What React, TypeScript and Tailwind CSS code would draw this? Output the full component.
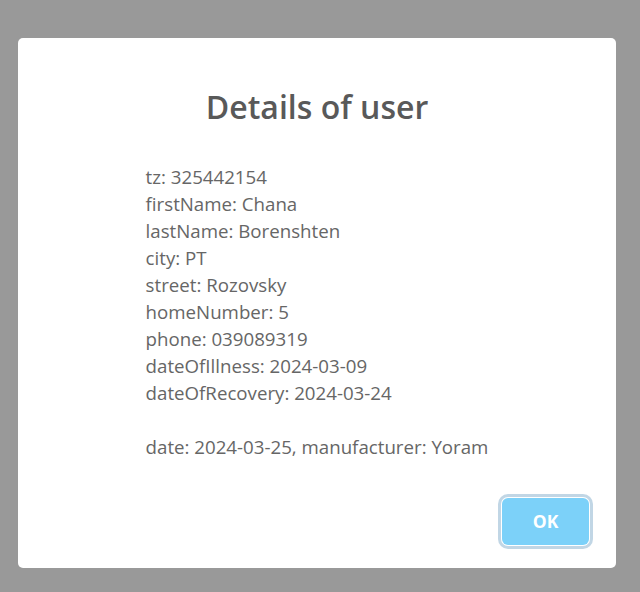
import React from "react";

const lines = [
  "tz: 325442154",
  "firstName: Chana",
  "lastName: Borenshten",
  "city: PT",
  "street: Rozovsky",
  "homeNumber: 5",
  "phone: 039089319",
  "dateOfIllness: 2024-03-09",
  "dateOfRecovery: 2024-03-24",
  "",
  "date: 2024-03-25, manufacturer: Yoram",
];

export default function App() {
  return (
    <div
      className="w-full h-[592px] bg-[#999999] pt-[38px] pl-[18px]"
      style={{ fontFamily: '"Open Sans", "Noto Sans", sans-serif' }}
    >
      <div className="w-[598px] h-[530px] bg-white rounded-[5px] flex flex-col pt-[47px]">
        <h2 className="text-center text-[32px] leading-[44px] font-semibold text-[#595959]">
          Details of user
        </h2>
        <div className="mt-[34px] flex justify-center">
          <div className="text-left text-[18.7px] leading-[27px] text-[#666666]">
            {lines.map((l, i) => (
              <div key={i} className="h-[27px] whitespace-pre">
                {l}
              </div>
            ))}
          </div>
        </div>
        <div className="mt-[38px] flex justify-end pr-[27px]">
          <button className="w-[87px] h-[47px] rounded-[6px] bg-[#7cd1f9] text-white font-bold text-[17.5px] leading-none shadow-[0_0_0_1px_#ffffff,0_0_0_4px_rgba(43,114,165,0.29)] flex items-center justify-center">
            OK
          </button>
        </div>
      </div>
    </div>
  );
}
